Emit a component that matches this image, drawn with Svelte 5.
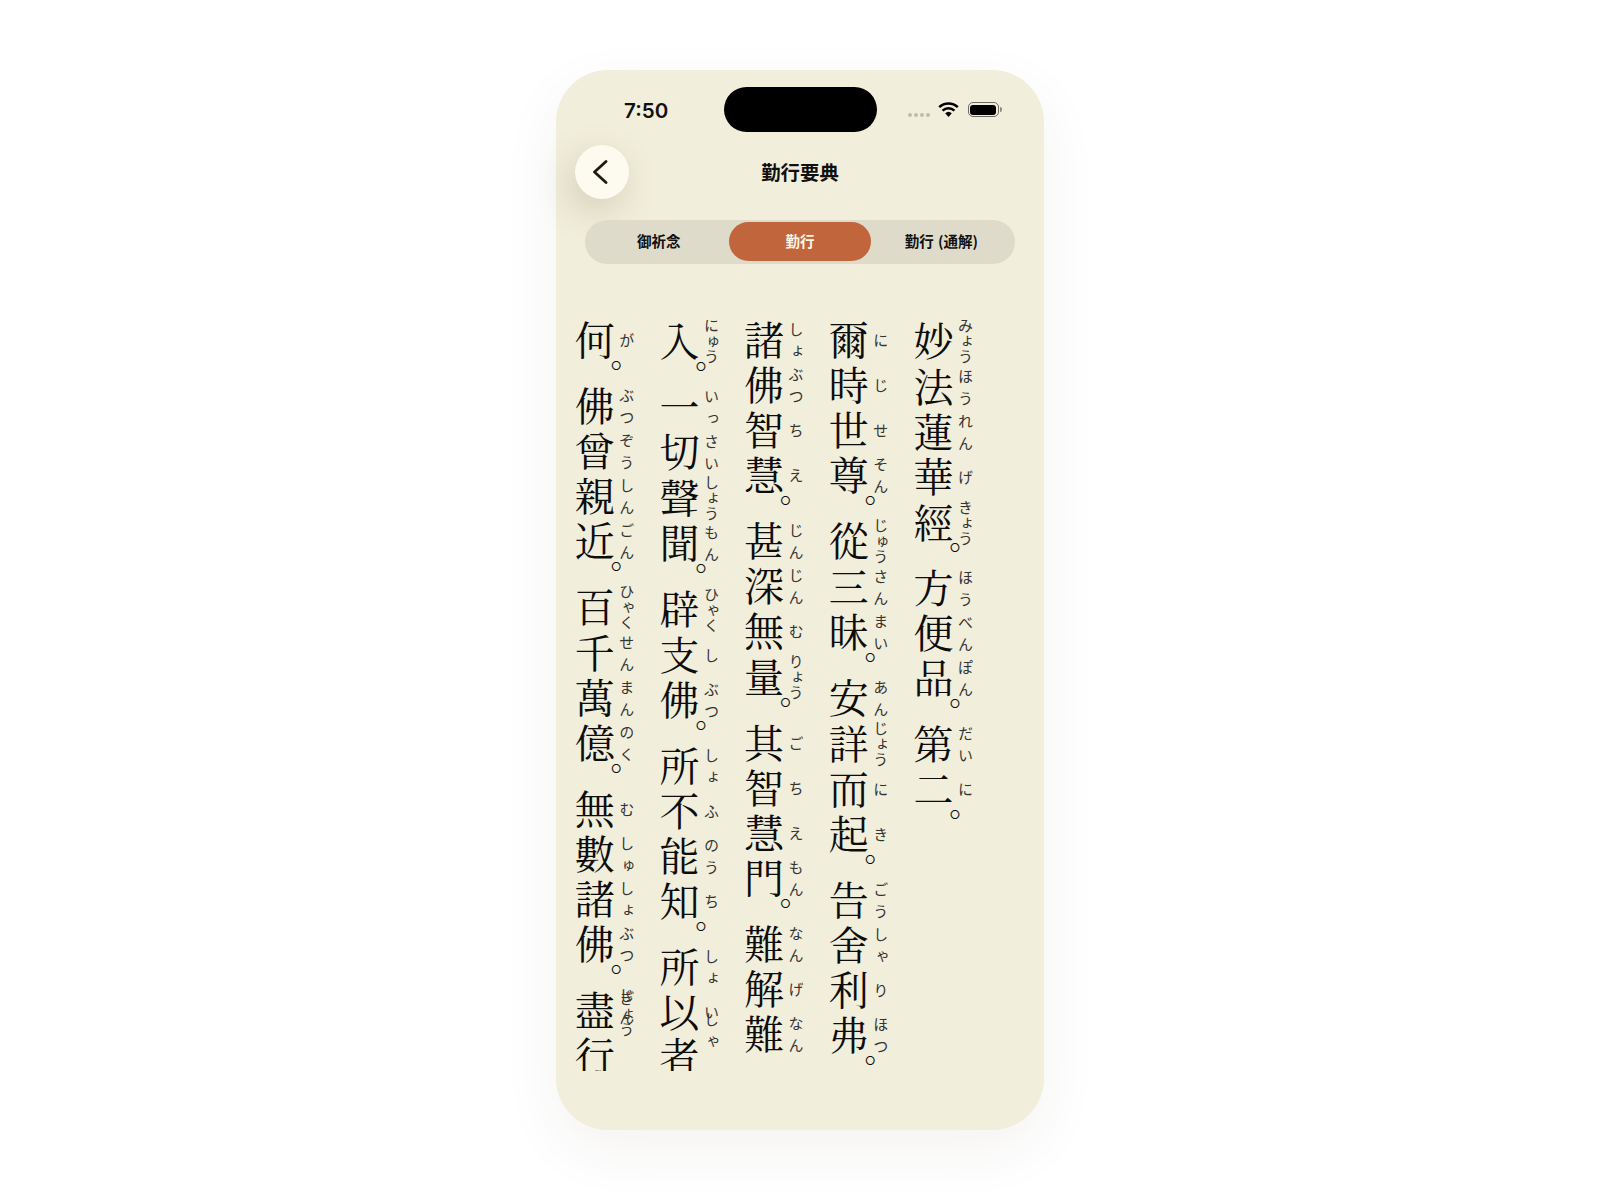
<script>
  const paragraphs = [
    [['妙','みょう'],['法','ほう'],['蓮','れん'],['華','げ'],['經','きょう'],'。',['方','ほう'],['便','べん'],['品','ぽん'],'。',['第','だい'],['二','に'],'。'],
    [['爾','に'],['時','じ'],['世','せ'],['尊','そん'],'。',['從','じゅう'],['三','さん'],['昧','まい'],'。',['安','あん'],['詳','じょう'],['而','に'],['起','き'],'。',['告','ごう'],['舍','しゃ'],['利','り'],['弗','ほつ'],'。'],
    [['諸','しょ'],['佛','ぶつ'],['智','ち'],['慧','え'],'。',['甚','じん'],['深','じん'],['無','む'],['量','りょう'],'。',['其','ご'],['智','ち'],['慧','え'],['門','もん'],'。',['難','なん'],['解','げ'],['難','なん'],['入','にゅう'],'。',['一','いっ'],['切','さい'],['聲','しょう'],['聞','もん'],'。',['辟','ひゃく'],['支','し'],['佛','ぶつ'],'。',['所','しょ'],['不','ふ'],['能','のう'],['知','ち'],'。',['所','しょ'],['以','い'],['者','しゃ','up3'],['何','が'],'。',['佛','ぶつ'],['曾','ぞう'],['親','しん'],['近','ごん'],'。',['百','ひゃく'],['千','せん'],['萬','まん'],['億','のく'],'。',['無','む'],['數','しゅ'],['諸','しょ'],['佛','ぶつ'],'。',['盡','じん','up1'],['行','ぎょう','up2']]
  ];
  const tabs = ['御祈念', '勤行', '勤行 (通解)'];
</script>

<div class="page">
  <div class="phone">
    <div class="status">
      <div class="time">7:50</div>
      <div class="island"></div>
      <div class="icons">
        <div class="dots"><i></i><i></i><i></i><i></i></div>
        <svg class="wifi" width="21" height="15" viewBox="0 0 21 15" aria-hidden="true">
          <path d="M1.2 5.2a13.4 13.4 0 0 1 18.6 0" fill="none" stroke="#000" stroke-width="2.5"/>
          <path d="M4.6 8.6a8.6 8.6 0 0 1 11.8 0" fill="none" stroke="#000" stroke-width="2.5"/>
          <path d="M7.2 11.2 10.5 15l3.3-3.8a4.8 4.8 0 0 0-6.6 0z" fill="#000"/>
        </svg>
        <div class="battery"><span></span></div>
      </div>
    </div>

    <div class="nav">
      <button class="back" aria-label="Back">
        <svg width="24" height="24" viewBox="0 0 24 24" aria-hidden="true">
          <path d="M16 1.5 4.5 12 16 22.5" fill="none" stroke="#1f1a12" stroke-width="2.8" stroke-linecap="round" stroke-linejoin="round"/>
        </svg>
      </button>
      <div class="title">勤行要典</div>
    </div>

    <div class="tabs">
      {#each tabs as t, i}
        <div class="tab" class:active={i === 1}>{t}</div>
      {/each}
    </div>

    <div class="reader">
      <div class="sutra">
        {#each paragraphs as p}
          <p>{#each p as w}{#if typeof w === 'string'}<span class="stop">{w}</span>{:else}<ruby class={w[2]}>{w[0]}<rt>{w[1]}</rt></ruby>{/if}{/each}</p>
        {/each}
      </div>
    </div>
  </div>
</div>

<style>
  :global(body) { margin: 0; background: #fff; }
  .page {
    height: 1200px;
    padding-top: 70px;
    box-sizing: border-box;
    font-family: "Noto Sans CJK JP", sans-serif;
  }
  .phone {
    width: 488px;
    height: 1060px;
    margin: 0 auto;
    background: #f1eedb;
    border-radius: 52px;
    box-shadow: 0 20px 60px rgba(60, 50, 20, 0.06);
    display: flex;
    flex-direction: column;
    color: #111;
  }
  .status {
    display: grid;
    grid-template-columns: 1fr 153px 1fr;
    align-items: center;
    margin-top: 17px;
    height: 45px;
  }
  .time {
    font-family: Inter, sans-serif;
    font-weight: 600;
    font-size: 20.6px;
    padding: 2px 0 0 68px;
  }
  .island { height: 45px; background: #000; border-radius: 23px; }
  .icons { display: flex; align-items: center; padding-left: 31px; }
  .dots { display: flex; gap: 2px; margin-right: 8px; margin-top: 10px; }
  .dots i { width: 4px; height: 4px; border-radius: 50%; background: #bfbcaa; }
  .wifi { margin-right: 9px; }
  .battery {
    width: 31px;
    height: 15px;
    box-sizing: border-box;
    border: 1px solid #6d6b60;
    border-radius: 5px;
    padding: 1.5px;
    position: relative;
  }
  .battery span { display: block; height: 100%; background: #000; border-radius: 3px; }
  .battery::after {
    content: "";
    position: absolute;
    right: -4px;
    top: 4px;
    width: 2px;
    height: 5px;
    background: #8d8b7e;
    border-radius: 0 2px 2px 0;
  }
  .nav {
    display: grid;
    grid-template-columns: 54px 1fr 54px;
    align-items: center;
    padding: 0 19px;
    margin-top: 13px;
    height: 54px;
  }
  .back {
    width: 54px;
    height: 54px;
    padding: 0;
    border: 0;
    border-radius: 50%;
    background: #fdfaef;
    box-shadow: -6px 12px 36px rgba(70, 60, 30, 0.18);
    display: flex;
    align-items: center;
    justify-content: center;
  }
  .title {
    text-align: center;
    font-size: 19.4px;
    font-weight: 700;
    line-height: 54px;
  }
  .tabs {
    display: grid;
    grid-template-columns: repeat(3, 1fr);
    margin: 21px 29px 0;
    height: 44px;
    padding: 2px 3px 3px;
    box-sizing: border-box;
    background: #dedbca;
    border-radius: 22px;
  }
  .tab {
    display: flex;
    align-items: center;
    justify-content: center;
    font-size: 14.5px;
    font-weight: 700;
    word-spacing: 1px;
    border-radius: 20px;
    padding-bottom: 2px;
    box-sizing: border-box;
  }
  .tab.active { background: #c1653d; color: #fdf6e6; }
  .reader {
    margin-top: 56px;
    height: 751px;
    overflow: hidden;
    display: flex;
    justify-content: flex-end;
    padding-right: 69px;
  }
  .sutra {
    writing-mode: vertical-rl;
    flex: none;
    width: 425px;
    height: 772px;
    font-family: "Noto Serif CJK JP", "Source Han Serif", "Liberation Serif", "Noto Sans CJK JP", serif;
    font-size: 40px;
    line-height: 84.7px;
    letter-spacing: 5px;
    color: #0d0d0d;
  }
  .sutra p { margin: 0; }
  .stop {
    font-size: 32px;
    letter-spacing: 5px;
    font-feature-settings: "vhal";
    position: relative;
    left: 13px;
    top: -6px;
  }
  rt {
    font-size: 15px;
    letter-spacing: 0.5px;
    color: #333;
    font-weight: 400;
    font-family: "Noto Sans CJK JP", sans-serif;
    line-height: 20px;
    position: relative;
    left: 4px;
    top: -2px;
  }
  .up1 rt { top: -6px; }
  .up2 rt { top: -44px; }
  .up3 rt { top: -29px; }
</style>
